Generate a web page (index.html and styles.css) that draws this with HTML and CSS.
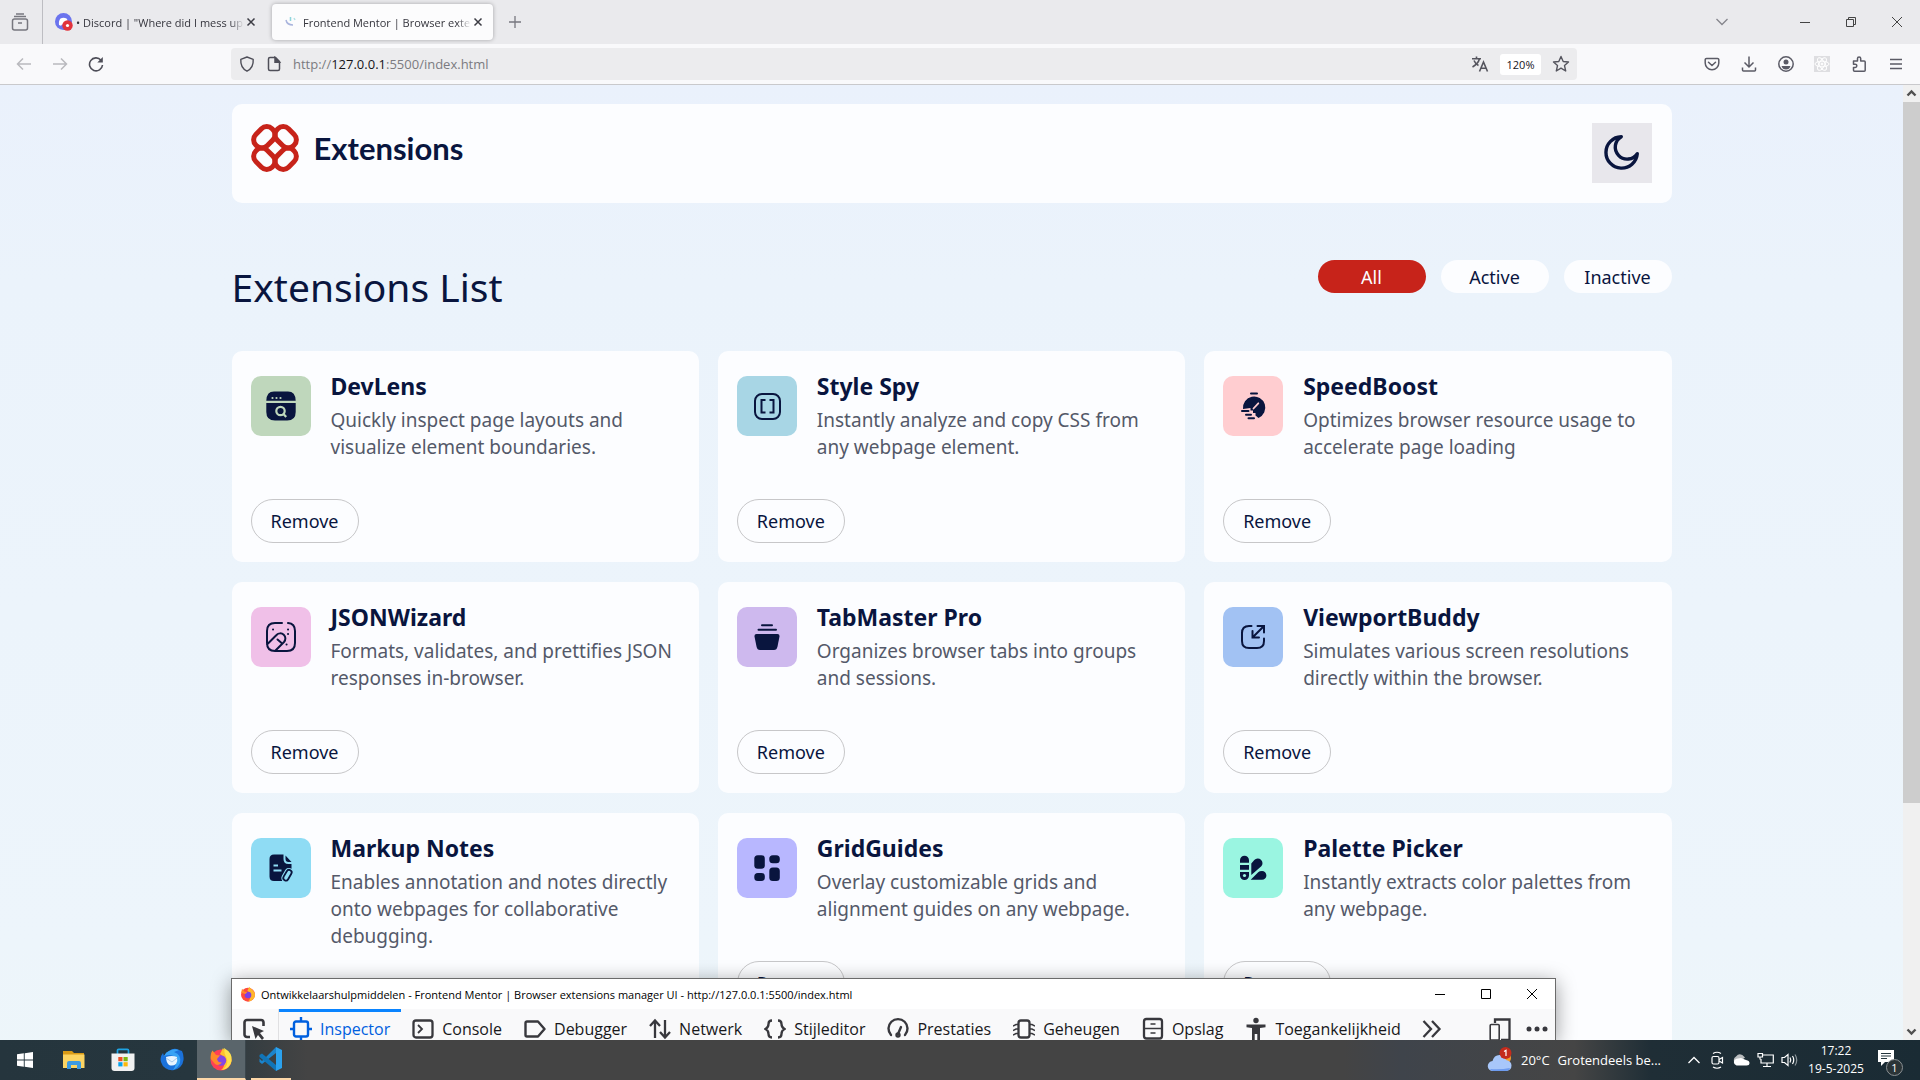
FILE: index.html
```html
<!DOCTYPE html>
<html lang="en">
<head>
<meta charset="utf-8">
<title>Frontend Mentor | Browser extensions manager UI</title>
<link rel="stylesheet" href="styles.css">
</head>
<body>
<div class="tabbar">
  <button class="view-btn" aria-label="Firefox View"><svg width="18" height="18" viewBox="0 0 18 18" fill="none" stroke="#77777f" stroke-width="1.5"><rect x="1.5" y="6" width="15" height="11" rx="2"/><path d="M3 3.6h12M5 1h8M7 10h4"/></svg></button>
  <div class="tab">
    <svg width="18" height="18" viewBox="0 0 18 18"><circle cx="8.5" cy="8.5" r="8.5" fill="#6b74ee"/><path d="M4 12c-.4-3 .2-5 1.500-6.500 2-1 4-1 6 0C12.800 7 13.400 9 13 12l-2 .8-1-1.200H7l-1 1.200z" fill="#fff"/><circle cx="12.500" cy="12.500" r="5.200" fill="#e2343c"/><circle cx="12.500" cy="12.500" r="1.600" fill="#fff"/></svg>
    <span class="tab-title">• Discord | "Where did I mess up</span>
    <button class="tab-close" aria-label="Close tab"><svg width="10" height="10" viewBox="0 0 10 10" stroke="#3c3c44" stroke-width="1.5"><path d="M1.500 1.500l7 7M8.500 1.500l-7 7"/></svg></button>
  </div>
  <div class="tab tab-active">
    <svg width="18" height="18" viewBox="0 0 18 18" fill="none" stroke-width="1.500"><path d="M4 7q1 5 7 5" stroke="#a9b4dd"/><path d="M8.500 4v4" stroke="#8fd5dc"/><path d="M12 5l1 2" stroke="#b5e3e6"/></svg>
    <span class="tab-title">Frontend Mentor | Browser exte</span>
    <button class="tab-close" aria-label="Close tab"><svg width="10" height="10" viewBox="0 0 10 10" stroke="#3c3c44" stroke-width="1.500"><path d="M1.500 1.500l7 7M8.500 1.500l-7 7"/></svg></button>
  </div>
  <button class="new-tab" aria-label="New tab"><svg width="12" height="12" viewBox="0 0 12 12" stroke="#77777f" stroke-width="1.300"><path d="M6 0v12M0 6h12"/></svg></button>
  <div class="win-controls">
    <button aria-label="List all tabs"><svg width="12" height="8" viewBox="0 0 12 8" fill="none" stroke="#85858c" stroke-width="1.300"><path d="M.5 1L6 6.500 11.500 1"/></svg></button>
    <span class="controls-gap"></span>
    <button aria-label="Minimize"><svg width="10" height="10" viewBox="0 0 10 10" stroke="#444"><path d="M0 5.500h10"/></svg></button>
    <button aria-label="Restore"><svg width="10" height="10" viewBox="0 0 10 10" fill="none" stroke="#444"><path d="M.5 2.500h7v7h-7zM2.500 2.500v-2h7v7h-2"/></svg></button>
    <button aria-label="Close"><svg width="10" height="10" viewBox="0 0 10 10" stroke="#444"><path d="M0 0l10 10M10 0L0 10"/></svg></button>
  </div>
</div>

<div class="navbar">
  <div class="nav-left">
    <button aria-label="Back"><svg width="16" height="16" viewBox="0 0 16 16" fill="none" stroke="#b9b9be" stroke-width="1.500"><path d="M15 8H1.500M7 2.500L1.500 8 7 13.500"/></svg></button>
    <button aria-label="Forward"><svg width="16" height="16" viewBox="0 0 16 16" fill="none" stroke="#b9b9be" stroke-width="1.500"><path d="M1 8h13.500M9 2.500L14.500 8 9 13.500"/></svg></button>
    <button aria-label="Reload"><svg width="16" height="16" viewBox="0 0 16 16" fill="none" stroke="#4e4e58" stroke-width="1.600"><path d="M13 4.200A6.500 6.500 0 1 0 14.500 9"/><path d="M14.800 1v5.500H9.300z" fill="#4e4e58" stroke="none"/></svg></button>
  </div>
  <div class="urlbar">
    <svg width="16" height="16" viewBox="0 0 16 16" fill="none" stroke="#4e4e58" stroke-width="1.400"><path d="M8 1L14.200 3.300C14.600 9 12.500 13 8 15.200 3.500 13 1.400 9 1.800 3.300z" stroke-linejoin="round"/></svg>
    <svg width="16" height="16" viewBox="0 0 16 16" fill="none" stroke="#4e4e58" stroke-width="1.500"><path d="M4 1.500h5.500L13.500 5.500V13a1.500 1.500 0 0 1-1.500 1.500H4A1.500 1.500 0 0 1 2.500 13V3A1.500 1.500 0 0 1 4 1.500z"/><path d="M9 1.500v4.800h4.500z" fill="#4e4e58"/></svg>
    <div class="url" role="textbox" aria-label="Address" contenteditable="true" spellcheck="false">http://<b>127.0.0.1</b>:5500/index.html</div>
    <button aria-label="Translate page"><svg width="18" height="16" viewBox="0 0 18 16" fill="none" stroke="#55555e" stroke-width="1.600"><path d="M1 2.800h9M5.500.5v2.300M8.500 2.800C7.500 6.500 5 9 1.500 11M3 4.500c1 2.500 2.500 4 4.500 5M8.500 15.500L12.500 6l4 9.500M10 12.200h5"/></svg></button>
    <button class="zoom-level">120%</button>
    <button aria-label="Bookmark"><svg width="18" height="18" viewBox="0 0 18 18" fill="none" stroke="#55555e" stroke-width="1.400" stroke-linejoin="round"><path d="M9 1.500l2.200 5 5.300.5-4 3.600 1.200 5.400L9 13.200 4.300 16l1.200-5.400L1.500 7l5.300-.5z"/></svg></button>
  </div>
  <div class="nav-right">
    <button aria-label="Pocket"><svg width="16" height="16" viewBox="0 0 16 16" fill="none" stroke="#5b5b66" stroke-width="1.500" stroke-linecap="round"><path d="M2.500 2.500h11a1.300 1.300 0 0 1 1.300 1.300V7a6.800 6.800 0 0 1-13.600 0V3.800a1.300 1.300 0 0 1 1.300-1.300zM4.500 6.300L8 9.500l3.500-3.200"/></svg></button>
    <button aria-label="Downloads"><svg width="16" height="16" viewBox="0 0 16 16" fill="none" stroke="#5b5b66" stroke-width="1.500"><path d="M8 .5v10M3.500 6.500L8 11l4.500-4.500M1.500 11.500V14a1 1 0 0 0 1 1h11a1 1 0 0 0 1-1v-2.500"/></svg></button>
    <button aria-label="Account"><svg width="16" height="16" viewBox="0 0 16 16"><circle cx="8" cy="8" r="7.200" fill="none" stroke="#5b5b66" stroke-width="1.500"/><circle cx="8" cy="6" r="2.500" fill="#5b5b66"/><path d="M3.500 10h9q-1 3.500-4.500 3.500T3.500 10z" fill="#5b5b66"/></svg></button>
    <button aria-label="React Developer Tools"><svg width="16" height="16" viewBox="0 0 16 16" fill="none" stroke="#fff"><path fill="#dedee1" stroke="none" d="M0 0h16v16H0z"/><ellipse cx="8" cy="8" rx="7" ry="2.800"/><ellipse cx="8" cy="8" rx="7" ry="2.800" transform="rotate(60 8 8)"/><ellipse cx="8" cy="8" rx="7" ry="2.800" transform="rotate(120 8 8)"/><circle cx="8" cy="8" r="1" fill="#fff"/></svg></button>
    <button aria-label="Extensions"><svg width="16" height="16" viewBox="0 0 16 16" fill="none" stroke="#5b5b66" stroke-width="1.500" stroke-linejoin="round"><path d="M2.500 5h4V2.500a1.600 1.600 0 0 1 3.200 0V5h3.500a1 1 0 0 1 1 1v8.200a1 1 0 0 1-1 1H3.500a1 1 0 0 1-1-1v-2.700h1.700a1.600 1.600 0 0 0 0-3.300H2.500z"/></svg></button>
    <button aria-label="Menu"><svg width="16" height="16" viewBox="0 0 16 16" stroke="#5b5b66" stroke-width="1.400"><path d="M2 3.500h12M2 8h12M2 12.500h12"/></svg></button>
  </div>
</div>

<div class="viewport">
  <main class="page">
    <div class="container">
      <header class="site-header">
        <div class="brand">
          <svg width="48" height="48" viewBox="0 0 48 48" fill="none" stroke="#c7231a" stroke-width="5"><rect x="1.800" y="5.300" width="23" height="16" rx="7.500" transform="rotate(-45 13.300 13.300)"/><rect x="23.200" y="5.300" width="23" height="16" rx="7.500" transform="rotate(45 34.700 13.300)"/><rect x="1.800" y="26.700" width="23" height="16" rx="7.500" transform="rotate(45 13.300 34.700)"/><rect x="23.200" y="26.700" width="23" height="16" rx="7.500" transform="rotate(-45 34.700 34.700)"/></svg>
          <span class="brand-name">Extensions</span>
        </div>
        <button class="theme" aria-label="Toggle theme"><svg width="60" height="60" viewBox="0 0 60 60" fill="none" stroke="#09153e" stroke-width="3.400" stroke-linejoin="round"><path d="M29.300 13.700A15.700 15.700 0 1 0 45.300 30.700 12 12 0 1 1 29.300 13.700z"/></svg></button>
      </header>

      <div class="list-head">
        <h1>Extensions List</h1>
        <div class="filters">
          <button class="filter filter-on">All</button>
          <button class="filter">Active</button>
          <button class="filter">Inactive</button>
        </div>
      </div>

      <section class="cards">
        <article class="card">
          <div class="info">
            <svg class="icon icon-devlens" viewBox="0 0 60 60"><path d="M23 15.500h14q7.500 0 7.700 9.300H15.300q.2-9.300 7.700-9.300zM15.300 27h29.400v9q0 8.500-8.500 8.500H24q-8.700 0-8.700-8.500z" fill="#09153e"/><g fill="#bfd7bc"><circle cx="21.500" cy="22" r="1.100"/><circle cx="25.500" cy="22" r="1.100"/><circle cx="29.500" cy="22" r="1.100"/></g><g fill="none" stroke="#bfd7bc" stroke-width="2.200"><circle cx="29.500" cy="35" r="4.200"/><path d="M32 37.500l3.200 3.500"/></g></svg>
            <div><h3>DevLens</h3><p>Quickly inspect page layouts and visualize element boundaries.</p></div>
          </div>
          <button class="remove">Remove</button>
        </article>
        <article class="card">
          <div class="info">
            <svg class="icon icon-spy" viewBox="0 0 60 60" fill="none" stroke="#09153e" stroke-width="2"><rect x="18" y="18" width="25" height="25" rx="7"/><path d="M28.500 24h-4v12.500h4M32.500 24h4v12.500h-4"/></svg>
            <div><h3>Style Spy</h3><p>Instantly analyze and copy CSS from any webpage element.</p></div>
          </div>
          <button class="remove">Remove</button>
        </article>
        <article class="card">
          <div class="info">
            <svg class="icon icon-speed" viewBox="0 0 60 60" stroke-linecap="round"><path d="M20 33A11.200 11.200 0 1 1 35.500 42L32.500 39.500V37H30V34.500H27.500V32z" fill="#09153e"/><path d="M30.500 32.500L35.300 27.300" stroke="#ffcdd0" stroke-width="1.800"/><path d="M28 17.500h6M19 35h6.500M23 38.700h5M25.500 42.300h5.500" stroke="#09153e" stroke-width="2"/></svg>
            <div><h3>SpeedBoost</h3><p>Optimizes browser resource usage to accelerate page loading</p></div>
          </div>
          <button class="remove">Remove</button>
        </article>
        <article class="card">
          <div class="info">
            <svg class="icon icon-json" viewBox="0 0 60 60" fill="none" stroke="#09153e" stroke-width="2" stroke-linecap="round"><path d="M31 16H24q-8 0-8 8v12q0 8 8 8h12q8 0 8-8V24q0-7.500-7-8M16 37.500L25.500 28a5 5 0 0 1 7.500 7L24 44M26.500 32.500l3.500 3M22 22.500h.1M37 22.500h.1M37 27h.1M35.500 37.500h.1"/></svg>
            <div><h3>JSONWizard</h3><p>Formats, validates, and prettifies JSON responses in-browser.</p></div>
          </div>
          <button class="remove">Remove</button>
        </article>
        <article class="card">
          <div class="info">
            <svg class="icon icon-tab" viewBox="0 0 60 60"><path d="M25 18.200h10M21.500 22.800h17.500" stroke="#09153e" stroke-width="2" stroke-linecap="round"/><path d="M19.500 27h21q2.300 0 2 2.500l-2 10q-.7 3.500-3.500 3.500H23q-2.800 0-3.500-3.500l-2-10q-.3-2.500 2-2.500z" fill="#09153e"/></svg>
            <div><h3>TabMaster Pro</h3><p>Organizes browser tabs into groups and sessions.</p></div>
          </div>
          <button class="remove">Remove</button>
        </article>
        <article class="card">
          <div class="info">
            <svg class="icon icon-view" viewBox="0 0 60 60" fill="none" stroke="#09153e" stroke-width="2"><path d="M28.500 19h-2.500q-7 0-7 7v8q0 7 7 7h8q7 0 7-7v-2.500M41 19L29.500 30.500M34.500 19H41v6.500M29.500 24v6.500H36" stroke-linecap="round"/></svg>
            <div><h3>ViewportBuddy</h3><p>Simulates various screen resolutions directly within the browser.</p></div>
          </div>
          <button class="remove">Remove</button>
        </article>
        <article class="card">
          <div class="info">
            <svg class="icon icon-notes" viewBox="0 0 60 60"><path d="M23 16.500h9.500v4.500q0 5 5 5h3v5q-4 0-6.500 4.500l-2.500 4.500q-.5 2 0 3H23q-4.500 0-4.500-4.500V21q0-4.500 4.500-4.500zM34.500 17.500l6 6.500h-3q-3 0-3-3z" fill="#09153e"/><path d="M22.500 27.500h4.500M22.500 32.500h8" stroke="#8fdcf4" stroke-width="1.800"/><rect x="34" y="31.500" width="5.200" height="11.500" rx="2.600" fill="#8fdcf4" stroke="#8fdcf4" stroke-width="4" transform="rotate(30 36.600 37)"/><rect x="34" y="31.500" width="5.200" height="11.500" rx="2.600" fill="none" stroke="#09153e" stroke-width="1.800" transform="rotate(30 36.600 37)"/></svg>
            <div><h3>Markup Notes</h3><p>Enables annotation and notes directly onto webpages for collaborative debugging.</p></div>
          </div>
          <button class="remove">Remove</button>
        </article>
        <article class="card">
          <div class="info">
            <svg class="icon icon-grid" viewBox="0 0 60 60" fill="#09153e"><rect x="17.300" y="17.300" width="10.500" height="13.400" rx="3.500"/><rect x="32.300" y="17.300" width="10.500" height="8" rx="3.500"/><rect x="17.300" y="35" width="10.500" height="8" rx="3.500"/><rect x="32.300" y="29.500" width="10.500" height="13.500" rx="3.500"/></svg>
            <div><h3>GridGuides</h3><p>Overlay customizable grids and alignment guides on any webpage.</p></div>
          </div>
          <button class="remove">Remove</button>
        </article>
        <article class="card">
          <div class="info">
            <svg class="icon icon-palette" viewBox="0 0 60 60" fill="#09153e"><path d="M17 24.800v-2.500a4.500 4.500 0 0 1 9 0v2.500zM17 27h9v4.700h-9zM17 34h9v3.500a4.500 4.500 0 0 1-9 0zM28.300 37V25.500l3-3.500a4.700 4.700 0 0 1 7 6.300zM27.700 41.800l7.500-7.500q1.300-1.300 3.800-1.300a4.400 4.400 0 0 1 0 8.800z"/><circle cx="21.500" cy="37.500" r="1.600" fill="#9af5e1"/></svg>
            <div><h3>Palette Picker</h3><p>Instantly extracts color palettes from any webpage.</p></div>
          </div>
          <button class="remove">Remove</button>
        </article>
      </section>
    </div>
  </main>
  <div class="scrollbar">
    <svg width="17" height="17" viewBox="0 0 17 17" fill="none" stroke="#505050" stroke-width="2.400"><path d="M4.500 10.500l4-4 4 4"/></svg>
    <div class="thumb"></div>
    <svg width="17" height="17" viewBox="0 0 17 17" fill="none" stroke="#505050" stroke-width="2.400"><path d="M4.500 6.500l4 4 4-4"/></svg>
  </div>

  <div class="devtools">
    <div class="dev-title">
      <svg width="16" height="16" viewBox="0 0 24 24"><circle cx="12" cy="13" r="10.500" fill="#ff4a3d"/><path d="M14 1c1 3 8 5 8.500 12 0 6-5 10-10.500 10 6-4 3-14-1-16z" fill="#ffb72b"/><circle cx="12" cy="13.500" r="5" fill="#7f3fe0"/><path d="M1.800 10L3 4l4 4.500 4 .5-3 3z" fill="#ff8a2a"/></svg>
      <span>Ontwikkelaarshulpmiddelen - Frontend Mentor | Browser extensions manager UI - http://127.0.0.1:5500/index.html</span>
      <div class="dev-controls">
        <button aria-label="Minimize"><svg width="10" height="10" viewBox="0 0 10 10" stroke="#000"><path d="M0 5.500h10"/></svg></button>
        <button aria-label="Maximize"><svg width="10" height="10" viewBox="0 0 10 10" fill="none" stroke="#000"><path d="M.5.5h9v9h-9z"/></svg></button>
        <button aria-label="Close"><svg width="10" height="10" viewBox="0 0 10 10" stroke="#000"><path d="M0 0l10 10M10 0L0 10"/></svg></button>
      </div>
    </div>
    <div class="dev-tools">
      <button class="picker" aria-label="Pick element"><svg width="22" height="22" viewBox="0 0 22 22"><path d="M7 19H4a2.500 2.500 0 0 1-2.500-2.500v-12A2.500 2.500 0 0 1 4 2h14a2.500 2.500 0 0 1 2.500 2.500V8" fill="none" stroke="#38383d" stroke-width="2.600"/><path d="M9 8l12 5-4 2 4 5-2 2-4-5-2.500 4z" fill="#38383d"/></svg></button>
      <button class="dev-tab dev-on"><svg width="22" height="24" viewBox="0 0 22 24" fill="none" stroke="#0060df" stroke-width="2.400"><rect x="4" y="4.500" width="14" height="15" rx="2"/><path d="M11 0v4M11 20v4M0 12h4M18 12h4"/></svg>Inspector</button>
      <button class="dev-tab"><svg width="22" height="24" viewBox="0 0 22 24" fill="none" stroke="#38383d" stroke-width="2.300"><rect x="1.500" y="3.500" width="19" height="17" rx="2.500"/><path d="M6 8l4 4-4 4" stroke-width="1.800"/></svg>Console</button>
      <button class="dev-tab"><svg width="22" height="24" viewBox="0 0 22 24" fill="none" stroke="#38383d" stroke-width="2.400" stroke-linejoin="round"><path d="M1.500 6a1.500 1.500 0 0 1 1.500-1.500h11L20.500 12 14 19.500H3A1.500 1.500 0 0 1 1.500 18z"/></svg>Debugger</button>
      <button class="dev-tab"><svg width="22" height="24" viewBox="0 0 22 24" fill="none" stroke="#38383d" stroke-width="2.300"><path d="M6 21V4M1 9l5-5.500L11 9M16 3v17M11 15l5 5.500 5-5.500"/></svg>Netwerk</button>
      <button class="dev-tab"><svg width="22" height="24" viewBox="0 0 22 24" fill="none" stroke="#38383d" stroke-width="2.300"><path d="M8 3.500Q4.500 3.500 4.500 7t-3 5q3 1.500 3 5t3.500 3.500M14 3.500q3.500 0 3.500 3.500t3 5q-3 1.500-3 5t-3.500 3.500"/></svg>Stijleditor</button>
      <button class="dev-tab"><svg width="22" height="24" viewBox="0 0 22 24" fill="none" stroke="#38383d" stroke-width="2.400" stroke-linecap="round"><path d="M4 18a9.500 9.500 0 1 1 14 0M11 17l3-7"/><circle cx="11" cy="18" r="1.500"/></svg>Prestaties</button>
      <button class="dev-tab"><svg width="22" height="24" viewBox="0 0 22 24" fill="none" stroke="#38383d" stroke-width="2.300"><rect x="5.500" y="3.500" width="11" height="17" rx="2.500"/><path d="M0 9l3-1.500h2M0 13.500L3 12h2M0 18l3-1.500h2M22 9l-3-1.500h-2M22 13.500L19 12h-2M22 18l-3-1.500h-2" stroke-width="1.400"/></svg>Geheugen</button>
      <button class="dev-tab"><svg width="22" height="24" viewBox="0 0 22 24" fill="none" stroke="#38383d" stroke-width="2.300"><rect x="2" y="2" width="18" height="19.500" rx="2.500"/><path d="M2 11.500h18M8.500 7h5M8.500 16h5" stroke-width="1.600"/></svg>Opslag</button>
      <button class="dev-tab"><svg width="22" height="24" viewBox="0 0 22 24" fill="#38383d"><circle cx="11" cy="3.500" r="2.700"/><path d="M1.500 7.500h19v2.700L15 11v13h-2.700v-7H9.700v7H7V11l-5.500-.8z"/></svg>Toegankelijkheid</button>
      <button class="more" aria-label="More tools"><svg width="20" height="20" viewBox="0 0 20 20" fill="none" stroke="#38383d" stroke-width="2.300"><path d="M1.500 2l7.500 8-7.500 8M10 2l7.500 8-7.500 8"/></svg></button>
      <div class="dev-end">
        <button aria-label="Responsive design mode"><svg width="22" height="24" viewBox="0 0 22 24" fill="none" stroke="#38383d" stroke-width="2.300"><path d="M6 6V2.500h14.500V23H12"/><rect x="1.200" y="7.500" width="9" height="15.500" rx="1" stroke-width="1.600"/></svg></button>
        <button aria-label="Options"><svg width="22" height="24" viewBox="0 0 22 24" fill="#38383d"><circle cx="3" cy="12" r="2.500"/><circle cx="11" cy="12" r="2.500"/><circle cx="19" cy="12" r="2.500"/></svg></button>
      </div>
    </div>
  </div>
</div>

<footer class="taskbar">
  <button class="task" aria-label="Start"><svg width="24" height="24" viewBox="0 0 24 24" fill="#fff"><path d="M4 6.300l6.800-1v6.200H4zM11.700 5.200L20 4v7.500h-8.300zM4 12.400h6.800v6.300L4 17.700zM11.700 12.400H20V20l-8.300-1.200z"/></svg></button>
  <button class="task" aria-label="File Explorer"><svg width="24" height="24" viewBox="0 0 24 24"><path d="M1 3h9l2 2h10v3H1z" fill="#d99a16"/><path d="M1 6.500h21.500V20H1z" fill="#fcd462"/><path d="M5 21v-6q0-2 2-2h10q2 0 2 2v6h-4v-4H9v4z" fill="#3d9ae0"/></svg></button>
  <button class="task" aria-label="Microsoft Store"><svg width="24" height="24" viewBox="0 0 24 24"><path d="M6.500 6V2.500q0-1.200 1.200-1.200h8.600q1.200 0 1.200 1.200V6" fill="none" stroke="#1fa4e4" stroke-width="1.700"/><path d="M.5 5.500h23V20q0 3-3 3h-17q-3 0-3-3z" fill="#f1f1f1"/><path d="M7.300 9h4.200v4.200H7.300z" fill="#f04e23"/><path d="M12.500 9h4.200v4.200h-4.200z" fill="#7cb812"/><path d="M7.300 14.200h4.200v4.200H7.300z" fill="#06a3ee"/><path d="M12.500 14.200h4.200v4.200h-4.200z" fill="#fdb809"/></svg></button>
  <button class="task" aria-label="Thunderbird"><svg width="24" height="24" viewBox="0 0 24 24"><path d="M9 3Q14-1 19 2l3 1q2 4 1.500 9A11.500 11.500 0 0 1 1 14Q-.5 9 3 5l1 3q2-4 5-5z" fill="#1b72db"/><path d="M9 3q5-3 10-1l-5 2q8 3 6 11-2 5-7 7 5-7 2-12T4 8q2-4 5-5z" fill="#38a3f5"/><path d="M6 9q6-2 11 0 1 4-1 7-3 2.500-7 1-3-3-3-8z" fill="#e9f5ff"/><path d="M6 10l6 4 5-4" fill="none" stroke="#a8c8ea"/></svg></button>
  <button class="task task-on" aria-label="Firefox"><svg width="24" height="24" viewBox="0 0 24 24"><circle cx="12" cy="13" r="10.500" fill="#ff4054"/><path d="M14 1c1 3 8 5 8.500 12 0 6-5 10-10.500 10 6-4 3-14-1-16z" fill="#ffc12f"/><path d="M15 1q9 5 7.500 13Q21 21 13 23q7-4 5-11-3-5-3-11z" fill="#ffe14d"/><circle cx="12" cy="13.500" r="5.200" fill="#8446e4"/><path d="M1.800 12Q1 7 3.500 3.500L7 8l4 .5-3 3.500q1 4 5 3.500-3 4-7 1.500z" fill="#ff8a2a"/></svg></button>
  <button class="task task-code" aria-label="Visual Studio Code"><svg width="24" height="24" viewBox="0 0 24 24"><path d="M17 0L3 14l-2.500-2.500V15L3 17 17 6z" fill="#1b84cc"/><path d="M.5 8L3 6.500 17 18v6L.5 10z" fill="#1175b8"/><path d="M17 0l6 3v18l-6 3z" fill="#2ba2ee"/></svg></button>
  <div class="tray">
    <button class="weather"><svg width="26" height="26" viewBox="0 0 26 26"><circle cx="18" cy="11" r="6" fill="#f29b2c"/><path d="M6 24a5 5 0 0 1-.5-10Q7 8 12.500 8q5 0 6.500 5 5.500 1 5.500 5.500T19.500 24z" fill="#a8c7fa"/><path d="M3 22q10 1 20-1-1 3-4 3H6q-2 0-3-2z" fill="#6d9bef"/><circle cx="18.500" cy="6" r="6" fill="#c42b1c"/><path d="M17 4.500l2-1.200V9" fill="none" stroke="#fff" stroke-width="1.200"/></svg><span>20°C</span><span>Grotendeels be...</span></button>
    <div class="tray-icons">
      <button aria-label="Show hidden icons"><svg width="16" height="16" viewBox="0 0 16 16" fill="none" stroke="#fff" stroke-width="1.300"><path d="M2.500 11L8 5.500l5.500 5.500"/></svg></button>
      <button aria-label="Meet Now"><svg width="16" height="18" viewBox="0 0 16 18" fill="none" stroke="#fff" stroke-width="1.200"><rect x="3" y="5.500" width="7" height="7.500" rx="1.500"/><path d="M10 8.500l3.500-2v5.500l-3.500-2M4 2.500q4-2.500 8 0M4 16q4 2.500 8 0"/></svg></button>
      <button aria-label="OneDrive"><svg width="18" height="16" viewBox="0 0 18 16"><path d="M5 12a4 4 0 0 1-1-7.500Q8-.5 13 5.500z" fill="#b9bcbe"/><path d="M4.500 13.500a3.500 3.500 0 0 1 0-6.800L9 6l5 2q3.500.5 3.500 3t-3 2.500z" fill="#fff"/></svg></button>
      <button aria-label="Network"><svg width="17" height="16" viewBox="0 0 17 16" fill="none" stroke="#fff" stroke-width="1.200"><path d="M6 3h10.300v8H4V7M10 11v3.500M6 14.500h8M1 1.500h4.500V5H1zM3 5v2.500"/></svg></button>
      <button aria-label="Volume"><svg width="17" height="16" viewBox="0 0 17 16" fill="none" stroke="#fff" stroke-width="1.200"><path d="M1 5.500h2.500L7 2.500v11l-3.500-3H1zM9 5.500q1.500 2.500 0 5M11.500 4q2.500 4 0 8"/><path d="M14 2.500q3.500 5.500 0 11" stroke="#8a9499"/></svg></button>
    </div>
    <button class="clock"><span>17:22</span><span>19-5-2025</span></button>
    <button class="notice" aria-label="Notifications"><svg width="28" height="28" viewBox="0 0 28 28"><path d="M3 4h16v12H10l-4 4v-4H3z" fill="#fff"/><path d="M6 7.500h10M6 10h10M6 12.500h6" stroke="#23343c" stroke-width="1.200"/></svg><span class="badge">1</span></button>
  </div>
</footer>
</body>
</html>
```

FILE: styles.css
```css
* { box-sizing: border-box; }

body {
  margin: 0;
  height: 100vh;
  display: flex;
  flex-direction: column;
  overflow: hidden;
  font-family: "Open Sans", "Noto Sans", sans-serif;
}

button {
  margin: 0;
  padding: 0;
  border: 0;
  background: none;
  font: inherit;
  color: inherit;
}

svg { display: block; flex: none; }

/* Tab strip */
.tabbar {
  flex: none;
  display: flex;
  align-items: center;
  height: 44px;
  background: #eaeaed;
  font-size: 12px;
  color: #35353d;
}
.view-btn {
  width: 43px;
  height: 44px;
  padding-left: 11px;
  border-right: 1px solid #bdbdc2;
}
.tab {
  display: flex;
  align-items: center;
  width: 221px;
  height: 36px;
  margin-left: 2px;
  padding: 0 10px;
}
.tab + .tab { margin-left: 6px; }
.tab-active {
  background: #fcfcfd;
  border-radius: 4px;
  box-shadow: 0 0 4px rgba(0, 0, 0, .3);
}
.tab-title {
  flex: 1;
  min-width: 0;
  margin-left: 3px;
  overflow: hidden;
  white-space: nowrap;
  font-size: 11px;
  mask-image: linear-gradient(to left, transparent, #000 14px);
}
.tab-close { margin-left: 2px; }
.new-tab { margin-left: 16px; }
.win-controls {
  display: flex;
  margin-left: auto;
}
.win-controls button {
  width: 46px;
  height: 44px;
  display: grid;
  place-items: center;
}
.controls-gap { width: 37px; }

/* Navigation bar */
.navbar {
  flex: none;
  display: flex;
  align-items: center;
  height: 41px;
  background: #f9f9fb;
  border-bottom: 1px solid #c9c9cc;
}
.nav-left {
  display: flex;
  gap: 20px;
  width: 231px;
  padding-left: 16px;
}
.urlbar {
  flex: 1;
  display: flex;
  align-items: center;
  gap: 11px;
  height: 32px;
  padding: 0 7px 0 8px;
  background: #ececee;
  border-radius: 4px;
}
.url {
  flex: 1;
  font-size: 13px;
  color: #7b7b80;
}
.url b { font-weight: 400; color: #15141a; }
.zoom-level {
  width: 41px;
  height: 21px;
  background: #fff;
  border-radius: 3px;
  font-size: 11px;
  color: #15141a;
}
.nav-right {
  display: flex;
  justify-content: space-between;
  width: 343px;
  padding: 0 16px 0 127px;
}

/* Page */
.viewport {
  flex: 1;
  min-height: 0;
  display: flex;
  position: relative;
  overflow: hidden;
}
.page {
  flex: 1;
  height: 1320px;
  background: linear-gradient(#eaf1fc, #ebf3fb 15%, #edf5fb 65%, #eef8f6);
  font-family: "Noto Sans", sans-serif;
  color: #09153e;
}
.container {
  max-width: 1440px;
  margin: 0 auto;
  padding-top: 19px;
}
.site-header {
  display: flex;
  justify-content: space-between;
  padding: 19px 20px 20px 19px;
  background: #fcfdff;
  border-radius: 10px;
}
.brand {
  display: flex;
  align-items: center;
  gap: 15px;
  height: 50px;
}
.brand-name {
  font: 700 31px/36px Lato, sans-serif;
}
.theme { background: #e8e7ec; }
.list-head {
  display: flex;
  justify-content: space-between;
  align-items: flex-start;
  margin: 57px 0 38px;
}
h1 {
  margin: 0;
  font-size: 39px;
  line-height: 53px;
  font-weight: 400;
}
.filters { display: flex; gap: 15px; }
.filter {
  width: 108px;
  height: 33px;
  border-radius: 17px;
  background: #fcfdff;
  font-size: 18px;
}
.filter-on { background: #c7231a; color: #fcfdff; }
.cards {
  display: grid;
  grid-template-columns: repeat(3, 1fr);
  gap: 20px 19px;
}
.card {
  padding: 19px;
  background: #fcfdff;
  border-radius: 10px;
}
.info {
  display: flex;
  gap: 20px;
  margin-bottom: 38px;
}
.icon {
  width: 60px;
  height: 60px;
  margin-top: 6px;
  border-radius: 10px;
}
.icon-devlens { background: #bfd7bc; }
.icon-spy { background: #a8d6e5; }
.icon-speed { background: #ffcdd0; }
.icon-json { background: #f0c0e8; }
.icon-tab { background: #ceb9ee; }
.icon-view { background: #a2c2f3; }
.icon-notes { background: #8fdcf4; }
.icon-grid { background: #b8b7ff; }
.icon-palette { background: #9af5e1; }
h3 {
  margin: 0 0 5px;
  font-size: 23px;
  line-height: 32px;
}
p {
  margin: 0;
  font-size: 19px;
  line-height: 27px;
  color: #545969;
}
.remove {
  display: block;
  width: 108px;
  height: 44px;
  border: 1px solid #c7c7c9;
  border-radius: 22px;
  font-size: 18px;
}
.scrollbar {
  flex: none;
  display: flex;
  flex-direction: column;
  width: 17px;
  background: #f0f0f0;
}
.scrollbar svg:last-child { margin-top: auto; }
.thumb { height: 73.4%; background: #cdcdcd; }

/* Developer tools window, floating over the page */
.devtools {
  position: absolute;
  left: 231px;
  right: 364px;
  bottom: 0;
  height: 62px;
  border: 1px solid #6b6b6b;
  border-bottom: 0;
  background: #f9f9fa;
  box-shadow: 0 4px 20px rgba(0, 0, 0, .4);
  color: #18181a;
}
.dev-title {
  display: flex;
  align-items: center;
  gap: 5px;
  height: 30px;
  padding-left: 8px;
  background: #fff;
  font-size: 11px;
  color: #000;
}
.dev-controls { display: flex; margin-left: auto; }
.dev-controls button {
  width: 46px;
  height: 30px;
  display: grid;
  place-items: center;
}
.dev-tools {
  display: flex;
  height: 40px;
  font-size: 16px;
}
.picker {
  width: 47px;
  padding: 0 0 0 11px;
  border-right: 1px solid #e0e0e2;
}
.dev-tab {
  display: flex;
  align-items: center;
  gap: 8px;
  padding: 0 11px;
  white-space: nowrap;
}
.dev-on { border-top: 3px solid #0a84ff; color: #0060df; padding-bottom: 3px; }
.more { padding-left: 10px; }
.dev-end {
  display: flex;
  align-items: center;
  gap: 15px;
  margin-left: auto;
  padding-right: 7px;
}

/* Taskbar */
.taskbar {
  flex: none;
  display: flex;
  height: 40px;
  background: linear-gradient(to right, #25353d 0, #26363e 10%, #444 16%, #444 70%, #3f444b 73%, #454545 82%, #1f2e36 86%, #1a2b34);
  color: #fff;
  font-size: 14px;
}
.task {
  width: 49px;
  display: grid;
  place-items: center;
}
.task-on { margin-left: 1px; background: #5a656b; border-bottom: 2px solid #fdd7a8; border-right: 1px solid #3b464c; }
.task-code { width: 40px; margin-left: 5px; border-bottom: 2px solid #fdd7a8; }
.tray {
  display: flex;
  margin-left: auto;
  padding-right: 10px;
}
.weather {
  display: flex;
  align-items: center;
  gap: 8px;
  margin-right: 25px;
  font-size: 13px;
}
.tray-icons { display: flex; align-items: center; gap: 7px; }
.clock {
  display: flex;
  flex-direction: column;
  justify-content: center;
  align-items: center;
  width: 76px;
  font-size: 12px;
  line-height: 18px;
}
.notice { position: relative; width: 36px; padding-left: 1px; }
.badge {
  position: absolute;
  right: 7px;
  bottom: 4px;
  width: 17px;
  height: 17px;
  border: 1px solid #8b9194;
  border-radius: 9px;
  background: #2b3437;
  font-size: 11px;
  line-height: 15px;
}
```
